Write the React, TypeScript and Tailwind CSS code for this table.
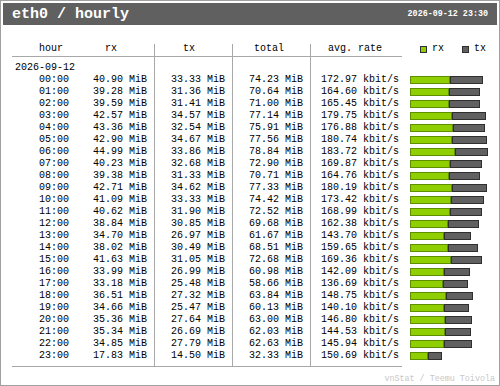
const rows: [string, number, number, number, number][] = [
  ['00:00', 40.9, 33.33, 74.23, 172.97],
  ['01:00', 39.28, 31.36, 70.64, 164.6],
  ['02:00', 39.59, 31.41, 71.0, 165.45],
  ['03:00', 42.57, 34.57, 77.14, 179.75],
  ['04:00', 43.36, 32.54, 75.91, 176.88],
  ['05:00', 42.9, 34.67, 77.56, 180.74],
  ['06:00', 44.99, 33.86, 78.84, 183.72],
  ['07:00', 40.23, 32.68, 72.9, 169.87],
  ['08:00', 39.38, 31.33, 70.71, 164.76],
  ['09:00', 42.71, 34.62, 77.33, 180.19],
  ['10:00', 41.09, 33.33, 74.42, 173.42],
  ['11:00', 40.62, 31.9, 72.52, 168.99],
  ['12:00', 38.84, 30.85, 69.68, 162.38],
  ['13:00', 34.7, 26.97, 61.67, 143.7],
  ['14:00', 38.02, 30.49, 68.51, 159.65],
  ['15:00', 41.63, 31.05, 72.68, 169.36],
  ['16:00', 33.99, 26.99, 60.98, 142.09],
  ['17:00', 33.18, 25.48, 58.66, 136.69],
  ['18:00', 36.51, 27.32, 63.84, 148.75],
  ['19:00', 34.66, 25.47, 60.13, 140.1],
  ['20:00', 35.36, 27.64, 63.0, 146.8],
  ['21:00', 35.34, 26.69, 62.03, 144.53],
  ['22:00', 34.85, 27.79, 62.63, 145.94],
  ['23:00', 17.83, 14.5, 32.33, 150.69],
];

const MAX = 78.84;
const BAR = 78;

function Bar({ rx, total }: { rx: number; total: number }) {
  const totalW = Math.round((total / MAX) * BAR);
  const rxW = Math.round((rx / MAX) * BAR);
  return (
    <div className="flex h-[8px]">
      <div className="h-full bg-[#8fce00] border border-[#5e8f00]" style={{ width: rxW }} />
      <div className="h-full bg-[#606060] border border-[#2f2f2f]" style={{ width: totalW - rxW }} />
    </div>
  );
}

function Row({
  hour,
  rx,
  tx,
  total,
  rate,
  bar,
}: {
  hour?: string;
  rx?: string;
  tx?: string;
  total?: string;
  rate?: string;
  bar?: React.ReactNode;
}) {
  return (
    <div className="flex h-[12px] leading-[12px]">
      <div className="flex w-[390px]">
        <div className="flex w-[142px]">
          <div className="w-[57px] text-right">{hour}</div>
          <div className="w-[78px] text-right">{rx}</div>
        </div>
        <div className="w-[78px] border-l border-[#a8a8a8] pr-[7px] text-right">{tx}</div>
        <div className="w-[78px] border-l border-[#a8a8a8] pr-[7px] text-right">{total}</div>
        <div className="w-[92px] border-l border-[#a8a8a8] pl-[10px] whitespace-pre">{rate}</div>
      </div>
      <div className="flex items-center pl-[8px]">{bar}</div>
    </div>
  );
}

export default function App() {
  return (
    <div
      className="w-[500px] h-[386px] border border-[#a0a0a0] bg-white p-[2px] text-black"
      style={{ fontFamily: '"Liberation Mono", "DejaVu Sans Mono", monospace' }}
    >
      <div className="flex h-[22px] items-center justify-between bg-[#606060] pl-[9px] pr-[9px] text-white">
        <span className="text-[15px] font-bold leading-none">eth0 / hourly</span>
        <span className="text-[8.4px] font-bold leading-none">2026-09-12 23:30</span>
      </div>

      <div className="mt-[17px] ml-[9px] text-[10px]">
        {/* column labels */}
        <div className="flex h-[15px] leading-[10px]">
          <div className="flex w-[390px] border-b border-[#a8a8a8] pt-[2px]">
            <div className="flex w-[142px]">
              <div className="w-[57px] pr-[6px] text-right">hour</div>
              <div className="w-[78px] pr-[30px] text-right">rx</div>
            </div>
            <div className="w-[78px] border-l border-[#a8a8a8] pr-[37px] text-right">tx</div>
            <div className="w-[78px] border-l border-[#a8a8a8] pr-[26px] text-right">total</div>
            <div className="w-[92px] border-l border-[#a8a8a8] pl-[17px]">avg. rate</div>
          </div>
          <div className="flex items-start pl-[18px] pt-[2px]">
            <div className="mt-[2px] h-[7px] w-[7px] border border-[#2f2f2f] bg-[#8fce00]" />
            <span className="ml-[5px] leading-[10px]">rx</span>
            <div className="ml-[18px] mt-[2px] h-[7px] w-[7px] border border-[#2f2f2f] bg-[#606060]" />
            <span className="ml-[5px] leading-[10px]">tx</span>
          </div>
        </div>

        {/* spacer below label rule */}
        <div className="flex h-[5px] w-[390px]">
          <div className="w-[142px]" />
          <div className="w-[78px] border-l border-[#a8a8a8]" />
          <div className="w-[78px] border-l border-[#a8a8a8]" />
          <div className="w-[92px] border-l border-[#a8a8a8]" />
        </div>

        <div className="flex h-[12px] leading-[12px] w-[390px]">
          <div className="w-[142px] pl-[3px]">2026-09-12</div>
          <div className="w-[78px] border-l border-[#a8a8a8]" />
          <div className="w-[78px] border-l border-[#a8a8a8]" />
          <div className="w-[92px] border-l border-[#a8a8a8]" />
        </div>

        {rows.map(([h, rx, tx, total, rate]) => (
          <Row
            key={h}
            hour={h}
            rx={`${rx.toFixed(2)} MiB`}
            tx={`${tx.toFixed(2)} MiB`}
            total={`${total.toFixed(2)} MiB`}
            rate={`${rate.toFixed(2)} kbit/s`}
            bar={<Bar rx={rx} total={total} />}
          />
        ))}

        {/* bottom rule */}
        <div className="flex h-[5px] w-[390px] border-b border-[#a8a8a8]">
          <div className="w-[142px]" />
          <div className="w-[78px] border-l border-[#a8a8a8]" />
          <div className="w-[78px] border-l border-[#a8a8a8]" />
          <div className="w-[92px] border-l border-[#a8a8a8]" />
        </div>
      </div>

      <div className="mt-[8px] flex justify-end pr-[2px] text-[8.4px] leading-none text-[#c8c8c8]">
        vnStat / Teemu Toivola
      </div>
    </div>
  );
}
